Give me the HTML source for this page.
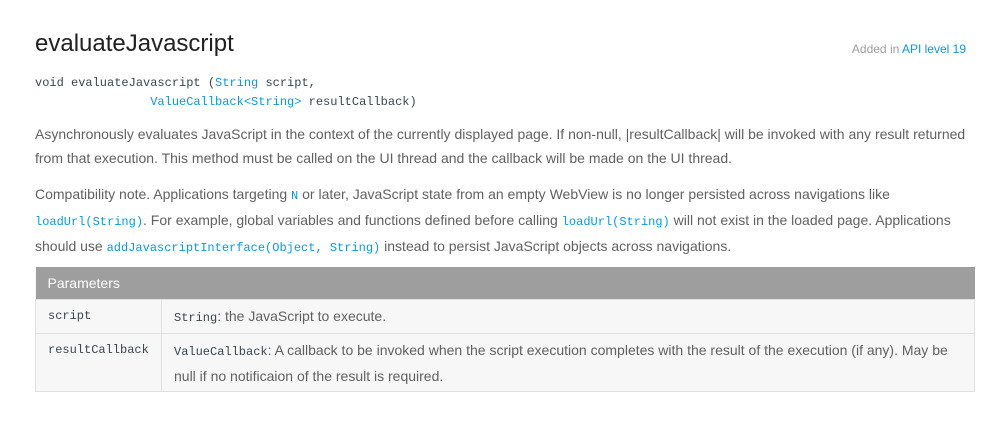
<!DOCTYPE html>
<html><head><meta charset="utf-8"><style>
body{margin:0;background:#fff;width:998px;height:425px;overflow:hidden;font-family:"Liberation Sans",sans-serif;color:#616161;}
.t{position:absolute;left:35px;top:30px;font-size:24px;color:#212121;}
.add{position:absolute;right:32px;top:42px;font-size:12px;color:#9e9e9e;}
.add span{color:#039be5}
.code{position:absolute;left:35px;top:74px;font-family:"Liberation Mono",monospace;font-size:12px;line-height:19px;color:#37474f;white-space:pre;}
.b{color:#039be5}
.p{position:absolute;left:35px;font-size:14px;line-height:24px;white-space:nowrap;letter-spacing:0}
.p code{font-family:"Liberation Mono",monospace;font-size:12px;color:#039be5;letter-spacing:0}
table{position:absolute;left:35px;top:267px;width:940px;border-collapse:collapse;table-layout:fixed;font-size:14px;background:#f7f7f7}
th{background:#9e9e9e;color:#fff;text-align:left;font-weight:normal;height:32px;padding:0 12px;}
td{border:1px solid #e0e0e0;padding:4px 12px 3px;line-height:24px;vertical-align:top;white-space:nowrap;overflow:hidden}
td.n{font-family:"Liberation Mono",monospace;font-size:12px;color:#37474f;}
td code{font-family:"Liberation Mono",monospace;font-size:12px;color:#37474f}
</style></head><body>
<div class="t">evaluateJavascript</div>
<div class="add">Added in <span>API level 19</span></div>
<div class="code">void evaluateJavascript (<span class="b">String</span> script,
                <span class="b">ValueCallback&lt;String&gt;</span> resultCallback)</div>
<div class="p" style="top:122px">Asynchronously evaluates JavaScript in the context of the currently displayed page. If non-null, |resultCallback| will be invoked with any result returned<br>from that execution. This method must be called on the UI thread and the callback will be made on the UI thread.</div>
<div class="p" style="top:182px">Compatibility note. Applications targeting <code>N</code> or later, JavaScript state from an empty WebView is no longer persisted across navigations like<br><code>loadUrl(String)</code>. For example, global variables and functions defined before calling <code>loadUrl(String)</code> will not exist in the loaded page. Applications<br>should use <code>addJavascriptInterface(Object, String)</code> instead to persist JavaScript objects across navigations.</div>
<table>
<colgroup><col style="width:126px"><col></colgroup>
<tr><th colspan="2">Parameters</th></tr>
<tr><td class="n">script</td><td><code>String</code>: the JavaScript to execute.</td></tr>
<tr><td class="n">resultCallback</td><td><code>ValueCallback</code>: A callback to be invoked when the script execution completes with the result of the execution (if any). May be<br>null if no notificaion of the result is required.</td></tr>
</table>
</body></html>
